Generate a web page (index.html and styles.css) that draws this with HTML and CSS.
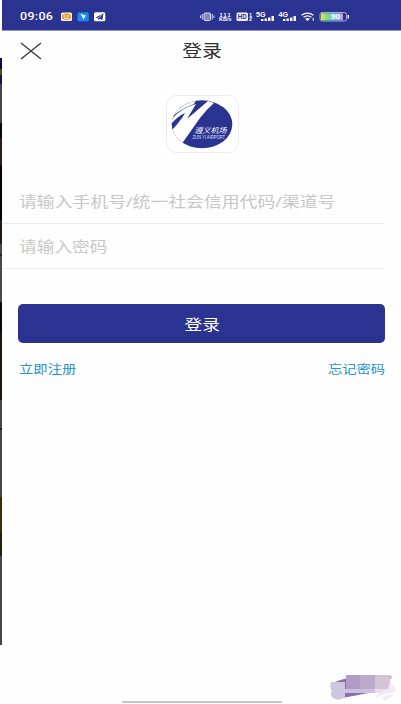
FILE: index.html
```html
<!DOCTYPE html>
<html lang="zh-CN">
<head>
<meta charset="utf-8">
<title>登录</title>
<link rel="stylesheet" href="styles.css">
</head>
<body>
<div class="backdrop"></div>
<main class="screen">
  <header class="status">
    <span class="clock">09:06</span>
    <svg class="status-icons" width="399" height="30" viewBox="2 0 399 30">
      <rect x="61" y="12.5" width="11" height="8.5" rx="1.5" fill="#fff5dc"/>
      <ellipse cx="66.5" cy="16.7" rx="4.7" ry="3.2" fill="#e99a26"/>
      <path d="M63.500 16h2.300m1.200 0h2.300M64 18.300h5" stroke="#fff" stroke-width="1"/>
      <rect x="77.500" y="12.300" width="11.300" height="9" rx="1.500" fill="#168bea"/>
      <path d="M80.500 13.500l2.500 1.300 3 .8-1.700 2-.3 2.200-1.500-2.300z" fill="#fff"/>
      <rect x="94" y="12.300" width="11.300" height="9" rx="1.500" fill="#fff"/>
      <path d="M95.500 17.500l8-4-1.200 6.500-3-1.300-1.300 1.300-.2-2z" fill="#2b3a8c"/>
      <path d="M98 18l4-3" stroke="#fff" stroke-width=".6"/>
      <g fill="none" stroke="#d9dcf5">
        <rect x="204" y="13" width="6.500" height="7.500" rx="1" fill="#8088c6"/>
        <path d="M202.200 14v5.500M212.300 14v5.500M200.500 15.500v2.500M214 15.500v2.500"/>
      </g>
      <g class="tiny">
        <text x="219.500" y="16.500" textLength="11">111</text>
        <text x="219" y="21.200" textLength="12.500" lengthAdjust="spacingAndGlyphs">KB/s</text>
        <text x="249" y="16.500">1</text>
        <text x="249" y="21.200">2</text>
        <text class="net" x="256" y="16.800" textLength="9.500" lengthAdjust="spacingAndGlyphs">5G</text>
        <text class="net" x="278.500" y="16.800" textLength="9.500" lengthAdjust="spacingAndGlyphs">4G</text>
      </g>
      <rect x="236.500" y="12.500" width="11.500" height="8.500" rx="1.500" fill="#f1f2ff"/>
      <text class="hd" x="237.700" y="19.300" textLength="9" lengthAdjust="spacingAndGlyphs">HD</text>
      <path d="M262.200 21v-2M265.700 21v-2.500M269.200 21v-3.500M272.700 21v-5M284.200 21v-2M287.700 21v-2.500M291.200 21v-3.500M294.700 21v-5" stroke="#fff" stroke-width="2.400"/>
      <g fill="none" stroke="#fff" stroke-width="1.300">
        <path d="M301.500 15.200q6-4.200 12 0M303.500 17.300q4-2.800 8 0"/>
        <path d="M305 18.800q2.500-1.600 5 0l-2.500 2.200z" fill="#fff" stroke="none"/>
        <path d="M313.200 17.800v3" stroke-width="1"/>
      </g>
      <defs><linearGradient id="charge"><stop offset="0" stop-color="#f0e840"/><stop offset=".3" stop-color="#72df87"/><stop offset=".62" stop-color="#73c9e9"/><stop offset="1" stop-color="#c79be6"/></linearGradient></defs>
      <rect x="320" y="12.500" width="26.500" height="8.500" rx="2" fill="none" stroke="#a9add1"/>
      <rect x="321" y="13.300" width="22" height="7" rx="1" fill="url(#charge)"/>
      <path d="M348.300 15v3.500" stroke="#fff" stroke-width="1.400"/>
      <text class="level" x="331" y="19.300" textLength="9" lengthAdjust="spacingAndGlyphs">90</text>
    </svg>
  </header>
  <nav class="titlebar">
    <svg class="close" width="22" height="18" viewBox="0 0 22 18"><path d="M1 1l20 16M21 1L1 17"/></svg>
    <h1 class="wide">登录</h1>
  </nav>
  <svg class="logo" width="73" height="58" viewBox="0 0 73 58">
    <defs><clipPath id="oval"><ellipse cx="36" cy="29.300" rx="30.300" ry="24"/></clipPath></defs>
    <rect x=".5" y=".5" width="72" height="57" rx="10" fill="#fff" stroke="#ececf0"/>
    <g clip-path="url(#oval)">
      <rect width="73" height="58" fill="#2b3390"/>
      <path d="M5 20Q15 10 30 5L28 9Q14 14 5 23z" fill="#fff"/>
      <path d="M5 25Q15 13 30 9L21 24L42 6L48 8Q41 14 34 23L15 50L3 45L5 36Q11 30 16 23L19 18Q12 21 5 29z" fill="#fff"/>
    </g>
    <text class="brand" x="28.500" y="38" textLength="32" lengthAdjust="spacingAndGlyphs">遵义机场</text>
    <text class="airport" x="26.500" y="43.500" textLength="32.500" lengthAdjust="spacingAndGlyphs">ZUN YI AIRPORT</text>
  </svg>
  <section class="form">
    <div class="field"><span class="wide hint">请输入手机号/统一社会信用代码/渠道号</span></div>
    <div class="field"><span class="wide">请输入密码</span></div>
    <div class="submit"><span class="wide">登录</span></div>
    <div class="links"><span class="wide">立即注册</span><span class="wide end">忘记密码</span></div>
  </section>
  <div class="home"></div>
</main>
<svg class="watermark" width="72" height="32" viewBox="0 0 72 32">
  <path d="M5 9Q15 4 29 3L58 15Q42 19 14 24z" fill="#8a6db1"/>
  <path d="M3 8h14v15q-6 5-12 1-4-4-1-7-3-5-1-9z" fill="#cfc6e0"/>
  <path d="M18 1h14v14H18z" fill="#b19bc7"/><path d="M32 1h15v14H32z" fill="#bdaacb"/><path d="M47 1h15v14H47z" fill="#d3c5d7"/>
  <path d="M17 15h30v4H17z" fill="#cec1dd"/><path d="M47 15h14l-8 4h-6z" fill="#e6dfeb"/>
  <path d="M61 3l2-1v3" stroke="#aaa0b1" fill="none"/>
  <path d="M62 9q11 8 2 10-9 0-17 6 3-7 13-10zM54 24q8-5 12-2-5 1-9 5" fill="#f0ebf4"/>
</svg>
</body>
</html>
```
FILE: styles.css
```css
body {
  margin: 0;
  width: 401px;
  height: 704px;
  overflow: hidden;
  display: flex;
  position: relative;
  background: #fefefe;
  font-family: "Noto Sans", "Noto Sans CJK SC", sans-serif;
}

.backdrop {
  width: 2px;
  height: 587px;
  margin-top: 58px;
  background: linear-gradient(#080b3c 11px, #46551f 11px 17px, #10154e 17px 26px, #454548 26px 65px, #0c0806 65px 80px, #2c1c14 80px 107px, #050404 107px 162px, #24180f 162px 186px, #48484b 186px 196px, #222 196px 198px, #48484b 198px 244px, #0e0a06 244px 275px, #211409 275px 342px, #464649 342px 370px, #222 370px 372px, #464649 372px 439px, #3c2c08 439px 475px, #251c0b 475px 498px, #464649 498px);
}

.screen {
  width: 399px;
  height: 704px;
  display: flex;
  flex-direction: column;
}

.status {
  height: 31px;
  flex: none;
  display: grid;
  box-sizing: border-box;
  background: #2b3390;
  border-bottom: 1px solid #9296c0;
}

.clock, .status-icons { grid-area: 1 / 1; }

.clock {
  justify-self: start;
  padding: 9px 0 0 18px;
  color: #fff;
  font: 500 11px/15px Roboto, sans-serif;
  letter-spacing: .3px;
  transform: scaleX(1.13);
  transform-origin: 18px 0;
}

.tiny {
  fill: #fff;
  font: bold 5.5px "Liberation Sans", sans-serif;
}

.net { font-size: 6.5px; }

.hd {
  fill: #2b3390;
  font: bold 6.5px "Liberation Sans", sans-serif;
}

.level {
  fill: #fff;
  font: bold 7px "Liberation Sans", sans-serif;
}

.wide {
  display: inline-block;
  transform: scaleX(1.165);
  transform-origin: left;
  white-space: nowrap;
}

.wide.hint { transform: scaleX(1.174); }

.titlebar {
  height: 39px;
  display: grid;
  grid-template-columns: 22px 1fr 39px;
  align-items: center;
  padding-left: 18px;
}

.close {
  fill: none;
  stroke: #303030;
  stroke-width: 1.2;
}

h1 {
  margin: 0;
  justify-self: center;
  color: #303030;
  font-size: 17px;
  font-weight: 400;
  line-height: 24px;
}

h1.wide, .submit .wide { transform-origin: center; }

.logo {
  margin: 25px 0 0 164px;
  flex: none;
}

.brand {
  fill: #fff;
  font: italic 7.5px "Noto Sans CJK SC", sans-serif;
}

.airport {
  fill: #dfe1f4;
  font: 4.8px "Liberation Sans", sans-serif;
}

.form { padding-top: 26px; }

.field {
  height: 44px;
  width: 366px;
  padding-left: 17px;
  border-bottom: 1px solid #ececec;
  color: #c7c7c7;
  font-size: 15.2px;
  line-height: 44px;
}

.submit {
  width: 367px;
  height: 39px;
  margin: 35px 0 0 16px;
  border-radius: 5px;
  background: #2b3390;
  color: #fff;
  text-align: center;
  text-indent: 1px;
  font-size: 15.2px;
  line-height: 40px;
}

.links {
  display: flex;
  justify-content: space-between;
  margin: 17px 16px 0 17px;
  color: #2395c6;
  font-size: 12.3px;
  line-height: 20px;
}

.wide.end { transform-origin: right; }

.home {
  width: 160px;
  height: 2px;
  margin: auto 0 1px 120px;
  border-radius: 1px;
  background: #c6c6c6;
}

.watermark {
  position: absolute;
  left: 328px;
  top: 674px;
}
```
